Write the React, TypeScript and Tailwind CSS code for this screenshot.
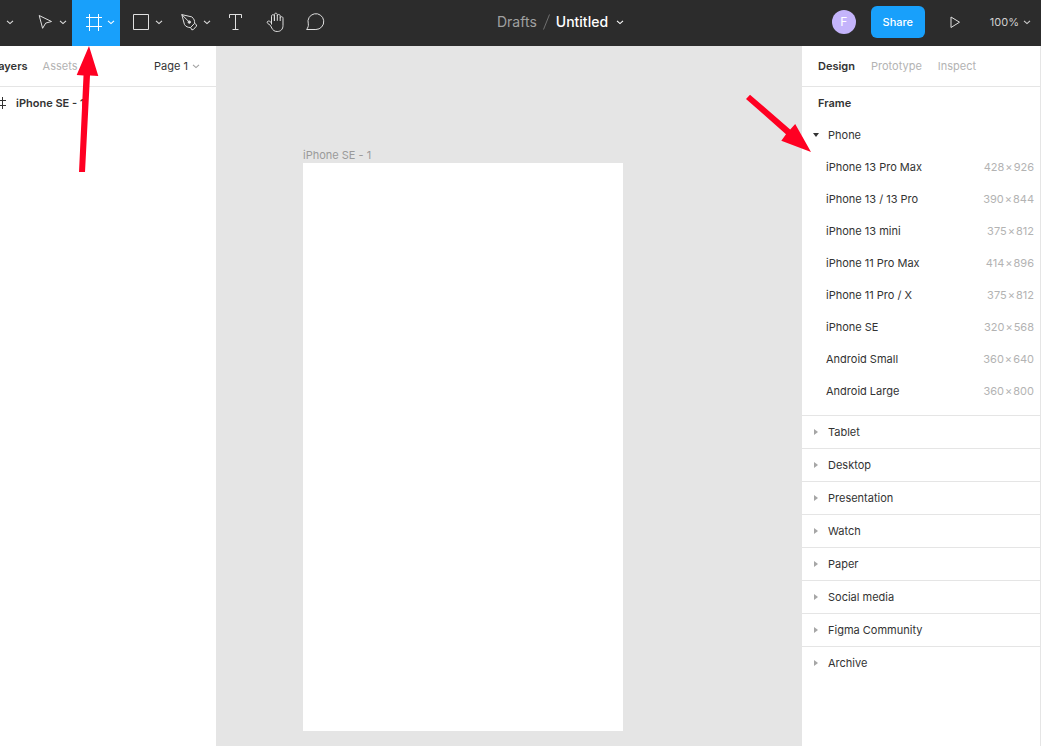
import React from "react";

const phones = [
  { name: "iPhone 13 Pro Max", w: 428, h: 926 },
  { name: "iPhone 13 / 13 Pro", w: 390, h: 844 },
  { name: "iPhone 13 mini", w: 375, h: 812 },
  { name: "iPhone 11 Pro Max", w: 414, h: 896 },
  { name: "iPhone 11 Pro / X", w: 375, h: 812 },
  { name: "iPhone SE", w: 320, h: 568 },
  { name: "Android Small", w: 360, h: 640 },
  { name: "Android Large", w: 360, h: 800 },
];

const groups = ["Tablet", "Desktop", "Presentation", "Watch", "Paper", "Social media", "Figma Community", "Archive"];

function Chevron({ className = "" }: { className?: string }) {
  return (
    <svg viewBox="0 0 8 8" className={`size-2 shrink-0 ${className}`} fill="none" stroke="currentColor" strokeWidth="1.1" aria-hidden="true">
      <path d="M1 2.8 4 5.6 7 2.8" />
    </svg>
  );
}

function Icon({ children }: { children: React.ReactNode }) {
  return (
    <svg viewBox="0 0 24 24" className="size-6 shrink-0" fill="none" stroke="currentColor" strokeWidth="1" aria-hidden="true">
      {children}
    </svg>
  );
}

function MenuTool({ label, active = false, children }: { label: string; active?: boolean; children: React.ReactNode }) {
  return (
    <button
      type="button"
      aria-label={label}
      aria-pressed={active}
      className={`flex w-12 shrink-0 items-center gap-px pl-2.5 pb-0.5 ${active ? "bg-[#18a0fb] text-white" : "text-[#e0e0e0]"}`}
    >
      <Icon>{children}</Icon>
      <Chevron />
    </button>
  );
}

function Tool({ label, children }: { label: string; children: React.ReactNode }) {
  return (
    <button type="button" aria-label={label} className="flex w-10 shrink-0 items-center justify-center pb-0.5 text-[#e0e0e0]">
      <Icon>{children}</Icon>
    </button>
  );
}

function Toolbar() {
  return (
    <header className="flex h-[46px] shrink-0 bg-[#2c2c2c]">
      <button type="button" aria-label="Main menu" className="flex w-6 shrink-0 items-center pb-0.5 pl-1.5 text-[#e0e0e0]">
        <Chevron />
      </button>
      <MenuTool label="Move">
        <path d="m5.2 5.5 3.4 12.8 3.1-5.2 5.8-1.6Z" />
      </MenuTool>
      <MenuTool label="Frame" active>
        <path d="M7.5 4v17M16.5 4v17M4 7.5h16M4 16.5h16" />
      </MenuTool>
      <MenuTool label="Rectangle">
        <path d="M3.5 4.5h15v15h-15z" />
      </MenuTool>
      <MenuTool label="Pen">
        <path d="m3.8 4.6 10 2.3c2.4 1.8 3 4.2 2.8 6.4l-4 4.2c-2.4.1-5-.8-6.2-3.2ZM3.8 4.6l7 7M12.6 17.5l1.2 2.3 1.5-.2 3.1-3.4.1-1.4-1.9-1.5" strokeLinejoin="round" />
        <circle cx="11.3" cy="12.1" r="1.2" fill="currentColor" />
      </MenuTool>
      <Tool label="Text">
        <path d="M5.5 8V4.5h12V8M11.5 4.5v15M8.5 19.5h6" />
      </Tool>
      <Tool label="Hand">
        <path d="M7.5 14.5V6.2c0-2 2.9-2 2.9 0V11M10.4 10.8V4.7c0-2 2.9-2 2.9 0v6.1M13.3 6c0-2 2.9-2 2.9 0v5M16.2 8.2c0-2 2.8-2 2.8 0v7.2c0 3.8-2.2 6.1-5.8 6.1-3 0-4.2-1.4-5.4-3.4l-1.3-2.6-2.9-2.2c-1.2-1.3.3-2.8 1.9-2.1l2 1.6" />
      </Tool>
      <Tool label="Comment">
        <path d="M2.6 19.5h9.3a7.9 7.9 0 1 0-7.6-5.6c.4 1.8-.4 3.9-1.7 5.6Z" />
      </Tool>
      <div className="ml-[161px] flex items-center gap-1.5 pb-0.5 font-['Inter',sans-serif] text-[14px] leading-5">
        <a href="#drafts" className="text-[#a0a0a0]">Drafts</a>
        <svg viewBox="0 0 7 18" className="h-[18px] w-[7px]" stroke="#707070" fill="none" aria-hidden="true">
          <path d="M6.5 1.5.5 16.5" />
        </svg>
        <button type="button" className="flex items-center gap-2 font-medium text-white">
          Untitled
          <Chevron />
        </button>
      </div>
      <div className="ml-auto flex items-center pb-0.5">
        <span className="flex size-6 items-center justify-center rounded-full bg-[#c4b4fb] text-[12px] text-white">F</span>
        <button type="button" className="ml-[15px] h-8 w-[54px] rounded-[6px] bg-[#18a0fb] text-[11px] font-medium text-white">
          Share
        </button>
        <button type="button" aria-label="Present" className="ml-[18px] text-[#e0e0e0]">
          <Icon>
            <path d="M8 7v10.5l8.5-5.3Z" />
          </Icon>
        </button>
        <button type="button" className="mr-2.5 ml-[23px] flex items-center gap-1 text-[11px] text-[#d0d0d0]">
          100%
          <Chevron />
        </button>
      </div>
    </header>
  );
}

function LayersPanel() {
  return (
    <aside className="-ml-6 w-60 shrink-0 bg-white">
      <div className="flex h-[41px] items-center border-b border-[#e5e5e5] px-4">
        <button type="button" className="font-semibold">Layers</button>
        <button type="button" className="ml-[15px] text-[#b3b3b3]">Assets</button>
        <button type="button" className="ml-auto flex items-center gap-1">
          Page 1
          <Chevron className="text-[#a0a0a0]" />
        </button>
      </div>
      <a href="#iphone-se-1" className="flex h-[31px] items-center gap-2.5 pl-[18px] font-semibold">
        <svg viewBox="0 0 12 12" className="size-3" fill="none" stroke="currentColor" aria-hidden="true">
          <path d="M3.5 0v12M8.5 0v12M0 3.5h12M0 8.5h12" />
        </svg>
        iPhone SE - 1
      </a>
    </aside>
  );
}

function Canvas() {
  return (
    <main className="min-w-0 flex-1 overflow-hidden pt-[101px] pl-[87px]">
      <div className="h-4 leading-4 text-[#9a9a9a]">iPhone SE - 1</div>
      <div className="h-[568px] w-80 bg-white" />
    </main>
  );
}

function DesignPanel() {
  return (
    <aside className="w-60 shrink-0 border-x border-[#e5e5e5] bg-white">
      <nav className="flex h-[41px] items-center gap-4 border-b border-[#e5e5e5] px-4 text-[#b3b3b3]">
        <button type="button" className="font-semibold text-[#333333]">Design</button>
        <button type="button">Prototype</button>
        <button type="button">Inspect</button>
      </nav>
      <h2 className="flex h-8 items-center pl-4 font-semibold">Frame</h2>
      <button type="button" aria-expanded="true" className="flex h-8 w-full items-center gap-2 pl-2.5">
        <svg viewBox="0 0 8 8" className="size-2" fill="currentColor" aria-hidden="true">
          <path d="M1 2h6L4 6Z" />
        </svg>
        Phone
      </button>
      <ul className="pb-2">
        {phones.map((p) => (
          <li key={p.name}>
            <button type="button" className="flex h-8 w-full items-center justify-between pr-1.5 pl-6">
              <span>{p.name}</span>
              <span className="flex items-center gap-px text-[#b3b3b3]">
                {p.w}
                <span>×</span>
                {p.h}
              </span>
            </button>
          </li>
        ))}
      </ul>
      {groups.map((g) => (
        <button key={g} type="button" aria-expanded="false" className="flex h-[33px] w-full items-center gap-2 border-t border-[#e5e5e5] pl-2.5">
          <svg viewBox="0 0 8 8" className="size-2 text-[#a6a6a6]" fill="currentColor" aria-hidden="true">
            <path d="M2 1v6l4-3Z" />
          </svg>
          {g}
        </button>
      ))}
    </aside>
  );
}

export default function App() {
  return (
    <div className="relative flex min-h-screen flex-col overflow-hidden bg-[#e5e5e5] font-['Inter',sans-serif] text-[11px] leading-4 text-[#333333]">
      <Toolbar />
      <div className="flex flex-1">
        <LayersPanel />
        <Canvas />
        <DesignPanel />
      </div>
      <svg viewBox="0 0 24 128" className="pointer-events-none absolute top-[46px] left-[76px] h-32 w-6" fill="#ff0022" aria-hidden="true">
        <path d="M13 0 22.3 30 14 29.6 9 126H3L7.5 29.4.7 29Z" />
      </svg>
      <svg viewBox="0 0 66 58" className="pointer-events-none absolute top-[94px] right-[229px] h-[58px] w-[66px]" fill="#ff0022" aria-hidden="true">
        <path d="m65 58-29.7-11.3 4.7-6.5L0 5 4 .7 44.2 35.5l5-5.5Z" />
      </svg>
    </div>
  );
}
